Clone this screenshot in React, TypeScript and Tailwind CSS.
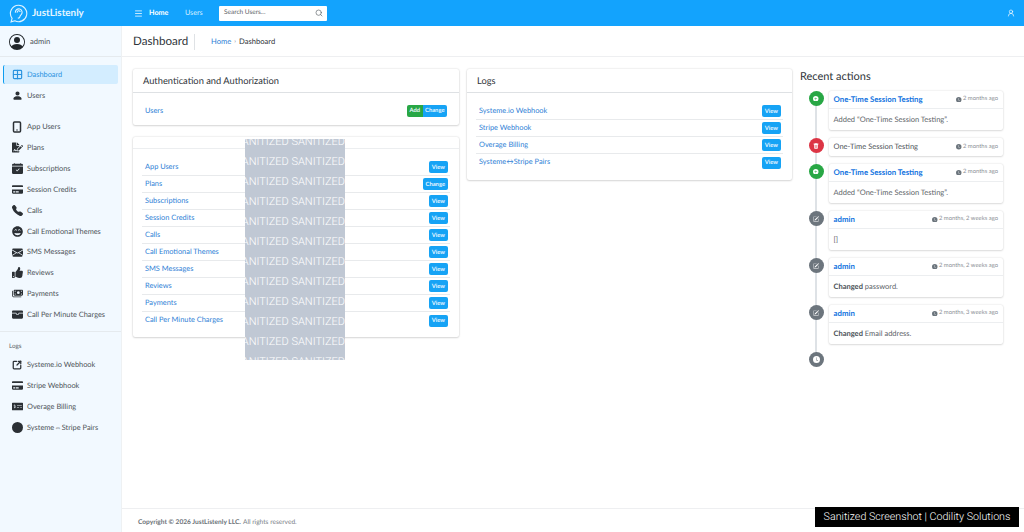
import { ReactNode } from 'react'
import { Grid2x2, Menu, Search, Smartphone, SquareArrowOutUpRight, UserRound } from 'lucide-react'
import {
  BsPersonFill,
  BsCalendarCheckFill,
  BsTelephoneFill,
  BsEnvelopeFill,
  BsWalletFill,
  BsCircleFill,
  BsPersonCircle,
  BsClockFill,
  BsTrashFill,
  BsPencilSquare,
  BsPlusCircleFill,
} from 'react-icons/bs'
import { FaCreditCard, FaFileSignature, FaGrinBeam, FaMoneyCheckAlt, FaThumbsUp } from 'react-icons/fa'
import { FaMoneyBills } from 'react-icons/fa6'

const sidebarMain = [
  { label: 'App Users', icon: <Smartphone className="h-[12px] w-[12px]" strokeWidth={3} /> },
  { label: 'Plans', icon: <FaFileSignature /> },
  { label: 'Subscriptions', icon: <BsCalendarCheckFill /> },
  { label: 'Session Credits', icon: <FaCreditCard /> },
  { label: 'Calls', icon: <BsTelephoneFill /> },
  { label: 'Call Emotional Themes', icon: <FaGrinBeam /> },
  { label: 'SMS Messages', icon: <BsEnvelopeFill /> },
  { label: 'Reviews', icon: <FaThumbsUp /> },
  { label: 'Payments', icon: <FaMoneyBills /> },
  { label: 'Call Per Minute Charges', icon: <BsWalletFill /> },
]

const sidebarLogs = [
  { label: 'Systeme.io Webhook', icon: <SquareArrowOutUpRight className="h-[10px] w-[10px]" strokeWidth={3} /> },
  { label: 'Stripe Webhook', icon: <FaCreditCard /> },
  { label: 'Overage Billing', icon: <FaMoneyCheckAlt /> },
  { label: 'Systeme⇔Stripe Pairs', icon: <BsCircleFill /> },
]

const appRows = [
  { label: 'App Users', action: 'View' },
  { label: 'Plans', action: 'Change' },
  { label: 'Subscriptions', action: 'View' },
  { label: 'Session Credits', action: 'View' },
  { label: 'Calls', action: 'View' },
  { label: 'Call Emotional Themes', action: 'View' },
  { label: 'SMS Messages', action: 'View' },
  { label: 'Reviews', action: 'View' },
  { label: 'Payments', action: 'View' },
  { label: 'Call Per Minute Charges', action: 'View' },
]

const logRows = ['Systeme.io Webhook', 'Stripe Webhook', 'Overage Billing', 'Systeme↔Stripe Pairs']

const actions = [
  { title: 'One-Time Session Testing', time: '2 months ago', body: <span>Added “One-Time Session Testing”.</span>, kind: 'add' },
  { title: '', plain: 'One-Time Session Testing', time: '2 months ago', kind: 'del' },
  { title: 'One-Time Session Testing', time: '2 months ago', body: <span>Added “One-Time Session Testing”.</span>, kind: 'add' },
  { title: 'admin', time: '2 months, 2 weeks ago', body: <span>[]</span>, kind: 'edit' },
  { title: 'admin', time: '2 months, 2 weeks ago', body: <span><b className="font-bold text-[#4b5157]">Changed</b> password.</span>, kind: 'edit' },
  { title: 'admin', time: '2 months, 3 weeks ago', body: <span><b className="font-bold text-[#4b5157]">Changed</b> Email address.</span>, kind: 'edit' },
]

function EarLogo() {
  return (
    <svg viewBox="0 0 24 24" className="h-[19px] w-[19px]" fill="none" stroke="#dff3ff" strokeWidth="1.4" strokeLinecap="round">
      <path d="M12 1.5a10.4 10.4 0 1 1-4.6 19.7L2.6 22.600l1.300-4.500A10.400 10.400 0 0 1 12 1.500z" />
      <path d="M8 10.500a4.300 4.300 0 1 1 7.700 2.600c-.9 1.100-1.700 1.600-1.900 2.900-.2 1.300-1.200 2-2.200 1.700" />
      <path d="M10.300 10.500a2 2 0 0 1 3.700-1" />
    </svg>
  )
}

function SideItem({ label, icon, active }: { label: string; icon: ReactNode; active?: boolean }) {
  return (
    <div
      className={
        active
          ? 'mx-[3px] flex h-[19px] items-center rounded-[2px] border-l border-[#0d9df0] bg-[#d3edff] pl-[7px] text-[#2a93df]'
          : 'mx-[3px] flex h-[20.850px] items-center pl-[8px] text-[#4d5358]'
      }
    >
      <span className="flex w-[12px] justify-center text-[11px] text-[#2b3035]">
        <span className={active ? 'text-[#2a93df]' : ''}>{icon}</span>
      </span>
      <span className="ml-[4px] whitespace-nowrap text-[7.400px]">{label}</span>
    </div>
  )
}

function ActionButton({ label }: { label: string }) {
  return (
    <span className="rounded-[2px] bg-[#16a3f5] px-[3px] py-[2.500px] text-[5.800px] leading-[7px] font-bold text-[#e8f6ff]">
      {label}
    </span>
  )
}

function Row({ label, action, last }: { label: string; action: ReactNode; last?: boolean }) {
  return (
    <div className={`flex h-[17px] items-center justify-between pr-[2px] pl-[3px] ${last ? '' : 'border-b border-[#e8eaec]'}`}>
      <span className="pb-[1px] text-[7.400px] text-[#2f7fd6]">{label}</span>
      {action}
    </div>
  )
}

function Card({ title, children, className }: { title?: string; children: ReactNode; className?: string }) {
  return (
    <div className={`rounded-[2px] bg-white shadow-[0_0_2px_rgba(0,0,0,0.18),0_1px_2px_rgba(0,0,0,0.12)] ${className ?? ''}`}>
      {title ? (
        <div className="flex h-[24px] items-center border-b border-[#dee1e4] px-[10px] pt-[1px] text-[9.300px] text-[#30353a]">{title}</div>
      ) : (
        <div className="h-[12px] border-b border-[#eceef0]" />
      )}
      {children}
    </div>
  )
}

function TimelineIcon({ kind }: { kind: string }) {
  if (kind === 'add')
    return (
      <span className="z-10 flex h-[15px] w-[15px] shrink-0 items-center justify-center rounded-full bg-[#28a745] text-[5.500px] text-white">
        <BsPlusCircleFill />
      </span>
    )
  if (kind === 'del')
    return (
      <span className="z-10 flex h-[15px] w-[15px] shrink-0 items-center justify-center rounded-full bg-[#dc3545] text-[6px] text-white">
        <BsTrashFill />
      </span>
    )
  if (kind === 'edit')
    return (
      <span className="z-10 flex h-[15px] w-[15px] shrink-0 items-center justify-center rounded-full bg-[#6c757d] text-[6px] text-white">
        <BsPencilSquare />
      </span>
    )
  return (
    <span className="z-10 flex h-[15px] w-[15px] shrink-0 items-center justify-center rounded-full bg-[#6c757d] text-[7px] text-white">
      <BsClockFill />
    </span>
  )
}

export default function App() {
  return (
    <div className="relative flex h-[532px] w-[1024px] flex-col overflow-hidden bg-white font-['Lato',sans-serif] [text-rendering:geometricPrecision]">
      {/* top bar */}
      <header className="flex h-[26px] shrink-0 items-center bg-[#13a3fd] text-white">
        <div className="flex w-[134px] items-center pl-[9px]">
          <EarLogo />
          <span className="ml-[4px] text-[9.900px] font-bold text-[#e4f5ff]">JustListenly</span>
        </div>
        <Menu className="h-[9px] w-[9px]" strokeWidth={2} />
        <span className="ml-[6px] w-[36px] text-[7.200px] font-bold">Home</span>
        <span className="w-[34px] text-[7.200px] text-[#d8f0ff]">Users</span>
        <div className="flex h-[15px] w-[108px] items-center justify-between rounded-[1px] bg-white pr-[4px] pl-[5px] text-[6.500px] text-[#5c6368]">
          <span>Search Users...</span>
          <Search className="h-[8px] w-[8px]" />
        </div>
        <UserRound className="mr-[9px] ml-auto h-[8px] w-[8px]" />
      </header>

      <div className="flex min-h-0 flex-1">
        {/* sidebar */}
        <aside className="w-[122px] shrink-0 border-r border-[#eef1f3] bg-[#f2f9ff]">
          <div className="flex h-[31px] items-center border-b border-[#e5eaee] pt-[1px] pl-[9px]">
            <BsPersonCircle className="h-[16px] w-[16px] text-[#22272b]" />
            <span className="ml-[5px] text-[7.600px] text-[#4d5358]">admin</span>
          </div>
          <div className="pt-[8px]">
            <SideItem label="Dashboard" icon={<Grid2x2 className="h-[11px] w-[11px]" strokeWidth={2.500} />} active />
            <div className="h-[1px]" />
            <SideItem label="Users" icon={<BsPersonFill />} />
            <div className="h-[10.700px]" />
            {sidebarMain.map((item) => (
              <SideItem key={item.label} label={item.label} icon={item.icon} />
            ))}
          </div>
          <div className="mt-[6px] border-t border-[#e5eaee] pt-[9px] pl-[9px] text-[6.300px] leading-[12px] text-[#5c6368]">Logs</div>
          <div className="pt-[1.300px]">
            {sidebarLogs.map((item) => (
              <SideItem key={item.label} label={item.label} icon={item.icon} />
            ))}
          </div>
        </aside>

        {/* main */}
        <main className="flex min-w-0 flex-1 flex-col">
          <div className="flex h-[31px] shrink-0 items-center border-b border-[#eeeff1] pt-[1px] pl-[11px]">
            <h1 className="w-[62px] border-r border-[#dfe2e5] text-[11.600px] leading-[16px] text-[#30353a]">Dashboard</h1>
            <span className="ml-[16px] text-[7.600px] text-[#2f7fd6]">Home</span>
            <span className="mx-[3px] text-[6px] text-[#6c757d]">›</span>
            <span className="text-[7.600px] text-[#30353a]">Dashboard</span>
          </div>

          <div className="flex flex-1 items-start gap-[8px] pt-[12px] pl-[11px]">
            <div className="flex w-[326px] shrink-0 flex-col gap-[12px]">
              <Card title="Authentication and Authorization">
                <div className="flex h-[32px] items-center justify-between pt-[3px] pr-[12px] pl-[12px]">
                  <span className="text-[7.400px] text-[#2f7fd6]">Users</span>
                  <span className="flex text-[5.800px] leading-[7px] font-bold text-[#e8f6ff]">
                    <span className="rounded-l-[2px] bg-[#28a745] px-[2.500px] py-[2.500px]">Add</span>
                    <span className="rounded-r-[2px] bg-[#16a3f5] px-[2.500px] py-[2.500px]">Change</span>
                  </span>
                </div>
              </Card>
              <Card>
                <div className="px-[9px] pt-[10px] pb-[8px]">
                  {appRows.map((row, i) => (
                    <Row key={row.label} label={row.label} action={<ActionButton label={row.action} />} last={i === appRows.length - 1} />
                  ))}
                </div>
              </Card>
            </div>

            <Card title="Logs" className="w-[325px] shrink-0">
              <div className="px-[9px] pt-[10px] pb-[9px]">
                {logRows.map((label, i) => (
                  <Row key={label} label={label} action={<ActionButton label="View" />} last={i === logRows.length - 1} />
                ))}
              </div>
            </Card>

            <div className="w-[203px] shrink-0">
              <h2 className="pt-[1px] text-[11px] leading-[14px] text-[#30353a]">Recent actions</h2>
              <div className="relative mt-[7px] flex flex-col gap-[8px]">
                <div className="absolute top-[4px] left-[15px] h-[265px] w-[2px] bg-[#dee2e6]" />
                {actions.map((a, i) => (
                  <div key={i} className="flex items-start pl-[8.500px]">
                    <TimelineIcon kind={a.kind} />
                    <div className="ml-[5px] flex-1 rounded-[2px] bg-white shadow-[0_0_2px_rgba(0,0,0,0.16),0_1px_2px_rgba(0,0,0,0.1)]">
                      <div className={`flex h-[18px] items-center justify-between px-[5px] ${a.body ? 'border-b border-[#eceef0]' : ''}`}>
                        {a.plain ? (
                          <span className="text-[7.500px] text-[#4d5358]">{a.plain}</span>
                        ) : (
                          <span className="text-[7.800px] font-bold text-[#1273e0]">{a.title}</span>
                        )}
                        <span className="flex items-center text-[5.900px] text-[#8a9096]">
                          <BsClockFill className="mr-[1px] h-[5.500px] w-[5.500px] text-[#6c757d]" />
                          {a.time}
                        </span>
                      </div>
                      {a.body && <div className="flex h-[21px] items-center px-[5px] pt-[1px] text-[7.500px] text-[#5c6368]">{a.body}</div>}
                    </div>
                  </div>
                ))}
                <div className="flex pl-[8.500px]">
                  <TimelineIcon kind="clock" />
                </div>
              </div>
            </div>
          </div>

          <footer className="flex h-[24px] shrink-0 items-center border-t border-[#eeeff1] pt-[4px] pl-[16px] text-[6.600px] text-[#7a8086]">
            <b className="font-bold text-[#6c7278]">Copyright © 2026 JustListenly LLC.</b>
            <span className="ml-[2px]">All rights reserved.</span>
          </footer>
        </main>
      </div>

      {/* masking block over the second card */}
      <div className="absolute top-[139px] left-[245px] flex h-[221px] w-[100px] flex-col items-end overflow-hidden bg-[#c0c8d4] font-['Roboto',sans-serif] text-[11px] leading-[20px] font-light whitespace-nowrap text-white">
        {Array.from({ length: 12 }).map((_, i) => (
          <div key={i} className={i === 0 ? '-mt-[7px]' : ''}>
            SANITIZED SANITIZED
          </div>
        ))}
      </div>

      <div className="absolute top-[507px] left-[815px] flex h-[20px] w-[204px] items-center justify-center bg-black pt-[1px] font-['Roboto',sans-serif] text-[10.700px] font-light whitespace-nowrap text-white">
        Sanitized Screenshot | Codility Solutions
      </div>
    </div>
  )
}
